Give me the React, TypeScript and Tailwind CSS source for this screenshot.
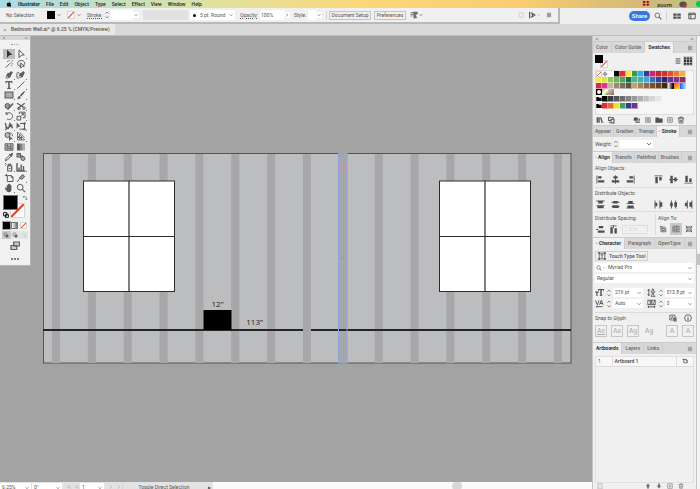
import type { ReactNode } from "react";
import clsx from "clsx";

const MENUS = ["File", "Edit", "Object", "Type", "Select", "Effect", "View", "Window", "Help"];

const f = { fill: "currentColor", stroke: "none" };

// All glyphs are drawn on a 10x10 grid
const GLYPHS: Record<string, ReactNode> = {
  apple: <path {...f} d="M6.600 1c0 1-.7 1.800-1.600 1.800C5 1.800 5.700 1 6.600 1ZM5 3.200c.6 0 1-.4 1.800-.4.700 0 1.300.4 1.700 1-1.500.9-1.200 3 .3 3.500C8.300 8.400 7.600 9.500 6.800 9.500c-.7 0-.9-.4-1.700-.4s-1 .4-1.700.4C2.300 9.500 1.200 7.500 1.200 5.700c0-1.800 1.100-2.900 2.200-2.900.7 0 1.100.4 1.600.4Z" />,
  selection: <path {...f} d="M3 .8 8.300 6H5.700L3 8.700Z" />,
  direct: <path d="M3 .9 8.300 6H5.700L3 8.700Z" />,
  wand: <path d="M1.500 8.800 6 4.300M6.800 3.500l1-1M5 1v1.300M8.800 4.800H7.500M8.900 1.100l-.7.7M3 2l.8.8M7.400 6.400l.8.900" />,
  lasso: <path d="M2.500 6.500C.6 4.500 2 1.500 5.200 1.500c3.400 0 4.500 3 2.500 4.800M2.500 6.500c1.200-.8 2.200.6 1 1.500M4.700 4l3.800 3.300H6.500L4.700 9Z" />,
  pen: <path {...f} d="m8.900 2.800-1.700-1.700-1.500 1.300-2.600 1L1.200 8.700l2.400-2.500.7.500-2.500 2.600 4.600-2 1.100-2.700Z" />,
  curvature: (
    <>
      <path {...f} d="M8.900 2.800 7.200 1.100 5.700 2.400l-2 1-1.400 4.400 2-2 .6.500-2 2 3.900-1.400 1-2.400Z" />
      <path d="M.9 3.800c0-2 2.200-2 2.200 0M.9 3.800v2c0 2 .6 3 1.700 3" />
    </>
  ),
  type: <path {...f} d="M1.500 1h7v2.300h-.8L7.300 2.200H5.800v5.600l1 .3V9H3.200v-.9l1-.3V2.200H2.700l-.4 1.100h-.8Z" />,
  line: <path d="m1.500 8.500 7-7" />,
  rect: <rect x="1" y="2" width="8" height="6" fill="#aaa" />,
  brush: <path {...f} d="M9.200.8c-2 .8-4 2.700-5.200 4.600L5.200 6.500C7 4.800 8.600 2.800 9.200.8ZM3.500 5.900C2 6 2.400 7.900.9 8.500c1.800.9 3.700.2 3.900-1.500Z" />,
  shaper: (
    <>
      <circle cx="3.500" cy="5" r="2.500" fill="#999" />
      <path d="M3.500 8.500 9 2.500" strokeWidth="1.800" />
    </>
  ),
  scissors: (
    <>
      <path d="M1 2.300 7.300 6M1.500 7.700 8.700 2.200" strokeWidth="1.200" />
      <circle cx="8" cy="7.200" r="1.200" />
      <circle cx="3" cy="7.500" r="1.200" />
    </>
  ),
  rotate: <path d="M2.200 2.700C5 .3 9 2.500 8.500 5.700 8 8.500 5 9.300 3 8M2 1v2.200h2.200" />,
  scale: <path d="M1 5.300h3.700V9H1ZM3.300 3V1.200H9v5.500H6.500M4.800 5 7.300 2.700M5.500 2.600h1.900v1.800" />,
  width: <path d="M1 2c1.500 1.500 1 5.500 3 5.500S4.500 3 6 3s1 3.500 3 4M1 8.700 8.500 4M1.500 5.500l2 2.500M6 1.700v4.500" strokeWidth="1.300" />,
  free: (
    <>
      <path {...f} d="M.6 1.500 4.800 5.600H2.700L.6 7.700Z" />
      <path d="M4 2.500h4.500v5.700H3.400M7.800 1.800h1.400v1.400H7.800ZM7.800 7.500h1.400v1.400H7.800Z" />
    </>
  ),
  builder: (
    <>
      <circle cx="3.500" cy="4" r="2.500" fill="#bbb" />
      <path d="M4.500 2.500c2-1.500 4.500.5 3.700 2.800" />
      <path {...f} d="M5 4.500 9 8.300H7L5 9.900Z" />
    </>
  ),
  perspective: <path d="M1.500 1v8h7.200ZM1.500 4.500l4 4.200M3.500 3v6M5.500 5v4M1.500 6.500h5M4 1.500l4.500 5" strokeWidth=".8" />,
  mesh: <path d="M1 1.700h8v6.600H1ZM1 4c2-1.500 3 2 8-.5M1 6.500c3-1.500 5 1 8-.5M3.600 1.700C2.500 4 5 6 3.600 8.300M6.500 1.700C5.500 4 8 6 6.500 8.300" fill="#bbb" strokeWidth=".8" />,
  gradient: (
    <>
      <rect x="1" y="1.500" width="3" height="7" {...f} />
      <rect x="4" y="1.500" width="2.500" height="7" {...f} opacity=".75" />
      <rect x="6.500" y="1.500" width="2.500" height="7" {...f} opacity=".45" />
    </>
  ),
  dropper: (
    <>
      <path d="M1.300 8.700 2 6.700 5.500 3.200 6.800 4.500 3.300 8Z" />
      <path {...f} d="m5 2.500.8-.7.600.5C7 1.500 8 .6 8.900 1.200c.7.900-.2 1.800-1 2.500l.4.600-.8.700Z" />
    </>
  ),
  blend: (
    <>
      <rect x="1" y="1.500" width="3.500" height="3.500" fill="#999" />
      <path {...f} d="m4 3 3 0 0 4-3-1.500Z" opacity=".6" />
      <circle cx="7" cy="6.500" r="2" fill="#aaa" />
    </>
  ),
  defaults: <path d="M1 1h5.500v5.500H1ZM4 4h5v5H4Z" fill="#fff" strokeWidth="1.500" />,
  spray: <path d="M3.700 4h4v5h-4ZM4.700 4V2.300h2V4M1 1.500h.8M1 3.500h.8M2.500 2.500h.8M5 6.500h1.500" strokeWidth="1.200" />,
  graph: <path d="M1 1v8h8.300M3 9V5.500M5.200 9V2.500M7.500 9V4" strokeWidth="1.400" />,
  artboard: <path d="M2.500.8V3M.8 2.600H3.300v5.900h5.700V4.200L7.500 2.600H3.300M7.300 2.600v1.800H9" />,
  slice: <path d="M1.200 8.800 4 5M3.700 4.600l3-3 2 2-3 3Z" fill="#999" />,
  hand: <path {...f} d="M2.700 5.200V2.700c0-.8 1-.8 1.100 0V1.500c0-.9 1.200-.9 1.200 0v-.2c0-.9 1.200-.9 1.200 0v1c0-.8 1.200-.8 1.200.1v4.100C7.400 8.300 6.500 9.200 5 9.200 3 9.200 2.400 7.700.9 5.500c-.4-.8.5-1.300 1-.8Z" />,
  search: (
    <>
      <circle cx="4.200" cy="4.200" r="2.900" />
      <path d="m6.400 6.400 2.700 2.700" strokeWidth="1.300" />
    </>
  ),
  swap: <path d="M2 2.800h3.200c1.200 0 2 .7 2 2V8M3.500 1 1.700 2.800l1.800 1.700M5.500 6.300 7.200 8.200 9 6.300" />,
  chevron: <path d="m2.500 3.700 2.500 2.500 2.500-2.500" />,
  right: <path d="m3.700 2.500 2.500 2.500-2.500 2.500" />,
  spinner: <path d="M3 3.300 5 1.300l2 2M3 6.700l2 2 2-2" strokeWidth=".8" />,
  close: <path d="m2 2 6 6M8 2 2 8" />,
  collapse: <path d="M4.700 2.500 2.200 5l2.500 2.500M8.200 2.500 5.700 5l2.500 2.500" />,
  menu: <path d="M1.500 2.200h7M1.500 4.100h7M1.500 6h7M1.500 7.900h7" />,
  list: <path d="M1 1.500h8M1 5h8M1 8.500h8" strokeWidth="1.600" />,
  grid: <path {...f} d="M0 .5h2.700v2.500H0ZM3.600.5h2.700v2.500H3.600ZM7.200.5h2.700v2.500H7.200ZM0 3.900h2.700v2.500H0ZM3.600 3.900h2.700v2.500H3.600ZM7.200 3.900h2.700v2.500H7.200ZM0 7.300h2.700v2.500H0ZM3.600 7.300h2.700v2.500H3.600ZM7.200 7.300h2.700v2.500H7.200Z" />,
  workspace: <path {...f} d="M.3 1.800h4.300v3H.3ZM5.400 1.800h4.300v3H5.400ZM.3 5.500h4.300v3H.3ZM5.400 5.500h4.300v3H5.400Z" />,
  panel: <path d="M1 1.500h8v7H1ZM1 3h8M3.500 3v5.500" strokeWidth="1.200" />,
  isolate: (
    <>
      <path d="M.8 2.200h4M.8 4.200h3M.8 6.200h2" />
      <path {...f} d="M4 1h5.500v3.500H7l2 4.500-2-.5-1 1.300L4.500 9Z" opacity=".85" />
    </>
  ),
  snap: <path d="M2 .8v8.400M3.500 2.500h2M3.500 7.500h2M5.500 3l3 2-3 2Z" strokeWidth="1.500" />,
  dots: <path d="M1 1.500h1.500M4.300 1.500h1.500M7.600 1.500h1.500M1 5h1.500M7.600 5h1.500M1 8.500h1.500M4.300 8.500h1.500M7.600 8.500h1.500" strokeWidth="1.500" />,
  folder: <path {...f} d="M.5 1.800h3.700l1 1.200h4.300v5.500h-9Z" />,
  books: <path {...f} d="M.8 1.500h1.700v7H.8ZM3 1.500h1.700v7H3ZM5 2l1.600-.5 2 6.500-1.600.6ZM9 8h.9v.8H9Z" />,
  cloud: <path d="M2 1.500v4h3M2 1.500h3M5 4h3.700v4.800H5ZM5.500 2h2V4M3 7.500v1.300" strokeWidth="1.300" />,
  kinds: <path {...f} d="M1 2h5v4H1ZM3 7h5.500v1.500H3ZM7 3h1.500v3H7Z" />,
  options: <path d="M1.200 1.200h7.600v7.600H1.200ZM3 3.500h4M3 5h4M3 6.500h4" />,
  add: <path d="M1.200 1.200h7.600v7.600H1.200ZM5 3v4M3 5h4" />,
  registration: <path d="M5 .5v9M.5 5h9M2.500 5a2.500 2.500 0 1 0 5 0 2.500 2.500 0 1 0-5 0" strokeWidth=".8" />,
  trash: <path d="M1 2.700h8M3.500 2.700V1.300h3v1.400M2.200 2.700l.5 6.100h4.600l.5-6.100M4.200 4.500v3M5.800 4.500v3" />,
  alignLeft: <path {...f} d="M.5.5h1v9h-1ZM2.300 1.300h3.900V4H2.300ZM2.300 5.700h6.900v2.700H2.300Z" />,
  alignCenter: <path {...f} d="M4.500.3h1v9.400h-1ZM2.700 1.300h4.600V4H2.700ZM.8 5.700h8.400v2.700H.8Z" />,
  alignRight: <path {...f} d="M8.500.5h1v9h-1ZM3.800 1.300h3.900V4H3.800ZM.8 5.700h6.900v2.700H.8Z" />,
  alignTop: <path {...f} d="M.5.5h9v1h-9ZM1.500 2.300h2.700v6.900H1.500ZM5.800 2.300h2.700v3.900H5.800Z" />,
  alignMiddle: <path {...f} d="M.3 4.500h9.400v1H.3ZM1.500.8h2.700v8.400H1.500ZM5.800 2.700h2.700v4.600H5.800Z" />,
  alignBottom: <path {...f} d="M.5 8.500h9v1h-9ZM1.500.8h2.700v6.900H1.500ZM5.800 3.800h2.700v3.900H5.800Z" />,
  distTop: <path {...f} d="M.5.6h9v1h-9ZM2.500 1.700h5v2.300h-5ZM.5 5.500h9v1h-9ZM1.500 6.600h7v2.500h-7Z" />,
  distMiddle: <path {...f} d="M.5 2h9v1h-9ZM2.500 1h5v3h-5ZM.5 6.900h9v1h-9ZM1.500 5.900h7v3h-7Z" />,
  distBottom: <path {...f} d="M.5 3.500h9v1h-9ZM2.500 1h5v2.500h-5ZM.5 8.500h9v1h-9ZM1.500 6h7v2.500h-7Z" />,
  distLeft: <path {...f} d="M.6.5h1v9h-1ZM1.700 3h2v4h-2ZM6 .5h1v9H6ZM7 2.500h2.200v5H7Z" />,
  distCenter: <path {...f} d="M2.200.5h1v9h-1ZM1.200 3h3v4h-3ZM6.900.5h1v9h-1ZM5.900 2.500h3v5h-3Z" />,
  distRight: <path {...f} d="M3.200.5h1v9h-1ZM1 3h2.200v4H1ZM8.300.5h1v9h-1ZM6 2.500h2.300v5H6Z" />,
  spaceV: <path {...f} d="M3 1h5v2.700H3ZM2 6h7.500v2.700H2ZM.3 4.500h2v1h-2Z" />,
  spaceH: <path {...f} d="M1.500 2.500h2.700v7H1.500ZM6 3.500h2.700v6H6ZM4.500.3h1v3h-1ZM1.500.5h7v1h-7Z" />,
  toArtboard: <path d="M2.500 1v7.500h6V4L6.500 2.500H1M4 4.300h2.700v2.500H4Z" />,
  toSelection: <path d="M1 1.500h8v7H1ZM3.700 1v8M6.400 1v8M1 3.800h8M1 6.300h8" strokeDasharray="1.200 .8" />,
  toKey: <path d="M2.500 2.500h5v5h-5ZM1 1l1.500 1.500M9 1 7.500 2.500M1 9l1.500-1.500M9 9 7.500 7.500M4 5h2" strokeWidth="1.200" />,
  touch: <path d="M1.500 1.500h7v7h-7ZM3.200 3.500h3.600M5 3.500v4M.5.500h1.500v1.500H.5ZM8 .5h1.500v1.500H8ZM.5 8h1.500v1.500H.5ZM8 8h1.500v1.500H8Z" />,
  fontSize: <path {...f} d="M.3 4h3.700v1.300H2.800V9H1.500V5.300H.3ZM3.500 1h6.300v2.300h-.9V2.200H7.500v6h.9V9H5V8.200h.9v-6H4.400v1.100h-.9Z" />,
  leading: <path d="M2 1.500v7M.7 3 2 1.500 3.300 3M.7 7 2 8.500 3.300 7M5 4l1.500-3.200L8 4M5 8.500l1.500-3.200L8 8.500M4.300 4.600h5M4.300 9.200h5" />,
  kerning: <path d="m.5 1.500 2 5 2-5M5 6.500l2-5 2 5M5.700 5h2.600M1.500 8.500h7M2.700 7.500l-1.200 1 1.200 1" />,
  tracking: (
    <>
      <path {...f} d="M.3.8h9.400v6H.3Z" opacity=".8" />
      <path stroke="#eee" d="m1.200 2 1.100 3.500L3.500 2M5.500 5.500 7 2l1.500 3.500" />
      <path d="M1 8.700h8M2.200 7.700l-1.200 1 1.200 1M7.800 7.700l1.200 1-1.200 1" />
    </>
  ),
  info: (
    <>
      <circle cx="5" cy="5" r="4.200" />
      <path d="M5 4.500V7.500M5 2.500v1" strokeWidth="1.200" />
    </>
  ),
  glyph: (
    <>
      <path d="M1 1.500h6.500v6H1ZM2.500 6.500 4.200 3l1.500 3.500" />
      <path {...f} d="M5.800 4.500h3.800v5H5.800Z" opacity=".7" />
    </>
  ),
  page: <path d="M.8 2.500h3.700M3 1v7h5.800V4.200L7 2.500H4.500M7 2.500v2h1.800" strokeWidth="1.300" />,
  up: <path {...f} d="m5 1 4 4.500H6.500V9h-3V5.500H1Z" />,
  down: <path {...f} d="m5 9 4-4.500H6.500V1h-3v3.500H1Z" />,
  screen: <path d="M3.700 1h5.800v4H3.700ZM1 4.500h5.800v4H1Z" fill="#ccc" strokeWidth="1.200" />,
  dropbox: <path {...f} d="m2.700 1 2.300 1.500-2.300 1.600L.4 2.500ZM7.300 1l2.300 1.500-2.300 1.600L5 2.500ZM2.700 4.300 5 5.900 2.700 7.400.4 5.900ZM7.300 4.300l2.300 1.600-2.300 1.500L5 5.900Z" />,
  creative: (
    <>
      <ellipse cx="5" cy="5.500" rx="4.600" ry="3.500" {...f} />
      <circle cx="7.500" cy="7.500" r="2" fill="#e23" stroke="none" />
    </>
  ),
  mode: (
    <>
      <circle cx="4" cy="4" r="2.700" />
      <path {...f} d="M4.500 4.500H9V9H4.500Z" />
    </>
  ),
};

const SIZES = { 4: "size-1", 6: "size-1.5", 8: "size-2", 9: "size-[9px]", 10: "size-2.5" };

function Icon({ name, size = 8, className }: { name: string; size?: keyof typeof SIZES; className?: string }) {
  return (
    <svg
      viewBox="0 0 10 10"
      fill="none"
      stroke="currentColor"
      className={clsx("shrink-0", SIZES[size], className)}
      aria-hidden
    >
      {GLYPHS[name]}
    </svg>
  );
}

function IconButton({ name, label, size = 8, className }: { name: string; label?: string; size?: keyof typeof SIZES; className?: string }) {
  return (
    <button type="button" aria-label={label ?? name} className={clsx("flex shrink-0 items-center justify-center", className)}>
      <Icon name={name} size={size} />
    </button>
  );
}

function Select({ label, value = "", className }: { label: string; value?: string; className?: string }) {
  return (
    <span className={clsx("flex h-[9px] items-center bg-white", className)}>
      <select aria-label={label} className="h-full min-w-0 flex-1 appearance-none overflow-hidden px-0.5 leading-[9px]">
        <option>{value}</option>
      </select>
      <Icon name="chevron" size={6} className="pointer-events-none mr-px" />
    </span>
  );
}

function NoneSwatch({ className }: { className?: string }) {
  return (
    <svg viewBox="0 0 10 10" className={clsx("shrink-0 bg-white outline outline-neutral-300 -outline-offset-1", className)} aria-hidden>
      <path d="M0 10 10 0" stroke="#e2452f" strokeWidth="1.500" />
    </svg>
  );
}

function MenuBar() {
  return (
    <header className="flex h-2 shrink-0 items-center bg-[linear-gradient(90deg,#a8dce6,#dfe3a0_30%,#fbd779_52%,#f9cd70_75%,#d2b878_92%,#b9c37e)] pl-1.5 text-[5px] text-neutral-800">
      <Icon name="apple" size={6} className="mr-1.5 text-black" />
      <nav className="flex items-center gap-1.5">
        <button type="button" className="font-bold">Illustrator</button>
        {MENUS.map((menu) => (
          <button key={menu} type="button" className="font-medium">{menu}</button>
        ))}
      </nav>
      <div className="ml-auto flex items-center gap-[7px]">
        <Icon name="dropbox" size={8} className="text-red-800" />
        <span className="text-[6px] font-medium">zoom</span>
        <Icon name="creative" size={8} className="text-neutral-600" />
        <span className="ml-0.5 h-1.5 w-1 rounded-l-sm bg-green-500" />
      </div>
    </header>
  );
}

function ControlBar() {
  return (
    <div className="flex h-4 shrink-0 items-stretch bg-[#eeeeee]">
      <div className="flex w-4/5 items-center border-r-2 border-b-2 border-[#b9b9b9] bg-[#f0f0f0] pl-1.5">
        <span className="w-10 shrink-0">No Selection</span>
        <button type="button" aria-label="Fill" className="ml-px size-2 shrink-0 bg-black" />
        <Icon name="chevron" size={6} className="mx-px" />
        <button type="button" aria-label="Stroke colour" className="ml-1 flex shrink-0">
          <NoneSwatch className="size-2" />
        </button>
        <Icon name="chevron" size={6} className="mx-px" />
        <label htmlFor="stroke-width" className="ml-1 w-4 shrink-0 underline decoration-dotted">Stroke:</label>
        <Icon name="spinner" size={8} />
        <input id="stroke-width" className="h-2.5 w-[22px] shrink-0 bg-white" />
        <Icon name="chevron" size={6} className="bg-white" />
        <select disabled aria-label="Width profile" className="mr-0.5 ml-1 h-2.5 w-[45px] shrink-0 appearance-none bg-[#e2e2e2]">
          <option />
        </select>
        <span className="flex h-2.5 w-[45px] shrink-0 items-center bg-white pl-[3px]">
          <span className="mr-0.5 size-[3px] shrink-0 rounded-full bg-black" />
          <Select label="Brush definition" value="5 pt. Round" className="min-w-0 flex-1" />
        </span>
        <label htmlFor="opacity" className="ml-[5px] w-5 shrink-0 underline decoration-dotted">Opacity:</label>
        <input id="opacity" defaultValue="100%" className="h-2.5 w-6 shrink-0 bg-white px-px" />
        <Icon name="right" size={6} className="bg-white" />
        <span className="ml-1 w-[14px] shrink-0">Style:</span>
        <span className="h-2.5 w-2 shrink-0 bg-white" />
        <Icon name="chevron" size={6} className="bg-white" />
        <div className="ml-1 flex shrink-0 items-center gap-[3px] border-l border-neutral-300 pl-0.5">
          <button type="button" className="h-[9px] w-[42px] border border-[#c4c4c4] leading-[7px]">Document Setup</button>
          <button type="button" className="h-[9px] w-8 border border-[#c4c4c4] leading-[7px]">Preferences</button>
        </div>
        <IconButton name="isolate" label="Select similar" className="ml-1" />
        <Icon name="chevron" size={6} />
        <div className="mr-1.5 ml-auto flex items-center gap-1">
          <IconButton name="dots" label="Align to pixel grid" size={6} className="text-neutral-400" />
          <span className="flex items-center">
            <IconButton name="snap" label="Snap" />
            <Icon name="chevron" size={6} className="text-neutral-400" />
          </span>
          <IconButton name="menu" label="Control menu" size={6} />
        </div>
      </div>
      <div className="flex flex-1 items-center justify-end pr-1">
        <button type="button" className="h-2.5 w-[21px] rounded-full bg-[#3878dc] text-[6px] leading-[10px] font-medium text-white">Share</button>
        <IconButton name="search" label="Search" className="mr-1 ml-1" />
        <span className="h-2.5 border-l border-neutral-300" />
        <IconButton name="workspace" label="Arrange documents" className="ml-1.5" />
        <IconButton name="panel" label="Workspace" className="ml-[7px]" />
      </div>
    </div>
  );
}

const TOOLS = [
  "selection", "direct", "wand", "lasso", "pen", "curvature", "type", "line", "rect", "brush",
  "shaper", "scissors", "rotate", "scale", "width", "free", "builder", "perspective", "mesh", "gradient",
  "dropper", "blend", "spray", "graph", "artboard", "slice", "hand", "search",
];

const SINGLE_TOOLS = ["selection", "wand", "lasso", "mesh", "gradient", "dropper", "blend", "artboard", "search"];

function Toolbar() {
  return (
    <aside className="absolute top-0 left-0 flex h-[230px] w-[31px] flex-col border-r border-b border-[#b5b5b5] bg-[#f1f1f1] text-[#5c5c5c]">
      <div className="flex h-1 shrink-0 items-center justify-between bg-[#d6d6d6] px-0.5">
        <Icon name="close" size={4} />
        <Icon name="collapse" size={4} />
      </div>
      <div className="mx-auto mt-1 h-px w-2 border-t border-dotted border-neutral-400" />
      <div className="mt-1 grid h-[144px] shrink-0 grid-cols-2 px-[3px]">
        {TOOLS.map((tool) => (
          <button
            key={tool}
            type="button"
            aria-label={tool}
            className={clsx(
              "flex items-center justify-center",
              tool === "selection" && "bg-[#bdbdbd] text-[#333]",
            )}
          >
            <Icon name={tool} size={10} />
            {!SINGLE_TOOLS.includes(tool) && <span className="-mr-px size-px shrink-0 self-end bg-neutral-500" />}
          </button>
        ))}
      </div>
      <div className="mt-0.5 grid h-[23px] shrink-0 grid-cols-[18px_8px] pl-[3px]">
        <div className="relative">
          <NoneSwatch className="absolute top-2 left-[7px] size-[15px]" />
          <span className="absolute top-0 left-0 size-[15px] border border-neutral-500 bg-black" />
          <Icon name="defaults" size={6} className="absolute bottom-0 left-0 text-black" />
        </div>
        <Icon name="swap" size={6} className="ml-px" />
      </div>
      <div className="mt-[3px] flex h-2 shrink-0 items-center justify-around px-0.5">
        <button type="button" aria-label="Color" className="size-[7px] bg-black outline outline-neutral-400" />
        <button type="button" aria-label="Gradient" className="size-[7px] border border-neutral-500 bg-linear-to-r from-white to-neutral-500" />
        <button type="button" aria-label="None" className="flex"><NoneSwatch className="size-[7px]" /></button>
      </div>
      <div className="mt-0.5 flex h-2 shrink-0 items-center px-[2px]">
        <IconButton name="mode" label="Draw normal" size={6} className="h-2 flex-1 bg-[#c8c8c8]" />
        <IconButton name="mode" label="Draw behind" size={6} className="h-2 flex-1 bg-[#e4e4e4]" />
        <IconButton name="mode" label="Draw inside" size={6} className="h-2 flex-1 bg-[#e4e4e4] text-neutral-300" />
      </div>
      <IconButton name="screen" label="Screen mode" size={10} className="mt-0.5" />
      <button type="button" aria-label="Edit toolbar" className="mt-[7px] flex justify-center gap-px">
        <span className="size-0.5 rounded-full bg-[#555]" />
        <span className="size-0.5 rounded-full bg-[#555]" />
        <span className="size-0.5 rounded-full bg-[#555]" />
      </button>
    </aside>
  );
}

const STRIPES = Array.from({ length: 15 }, (_, i) => 52 + i * 35.85);

function WindowShape({ x }: { x: number }) {
  return (
    <g transform={`translate(${x} 145)`} stroke="#2c2c2c">
      <rect width="91" height="110.500" fill="#fff" />
      <path d="M45.500 0v110M0 55.500h91" strokeWidth="1.200" />
    </g>
  );
}

function Artwork() {
  return (
    <svg viewBox="0 0 592 446" className="h-full w-full" role="img" aria-label="Wall elevation">
      <rect x="43.500" y="117.500" width="527.500" height="209.500" fill="#bcbdbf" stroke="#555" />
      {STRIPES.map((x) => (
        <rect key={x} x={x} y="118" width="8" height="209" fill="#a7a7a9" />
      ))}
      <WindowShape x={83.5} />
      <WindowShape x={439.5} />
      <path d="M43 294h260M311 294h260" stroke="#222426" strokeWidth="2" />
      <rect x="203.500" y="274" width="28" height="20" />
      <g fontSize="8" fill="#222" textAnchor="middle" className="font-['Open_Sans','Noto_Sans',sans-serif]">
        <text x="217.500" y="271">12”</text>
        <text x="254.500" y="289">113”</text>
      </g>
      <rect x="338.500" y="117.500" width="8.500" height="209.500" fill="none" stroke="#8fa3dc" />
      <path d="M338.500 133.500l2-1 2 .5 2-1 2.500.5" fill="none" stroke="#d685c8" strokeWidth="1.500" />
      <path d="m341.500 221.500 2 2m0-2-2 2" stroke="#7d8fd0" strokeWidth=".8" />
    </svg>
  );
}

function StatusBar() {
  return (
    <footer className="flex h-[7px] shrink-0 items-start overflow-hidden bg-[#e3e3e3] pt-px leading-[9px]">
      <Select label="Zoom" value="6.25%" className="w-[31px]" />
      <Select label="Rotation" value="0°" className="ml-px w-[30px]" />
      <span className="ml-1 flex items-center gap-0.5 pt-px text-neutral-400">
        <Icon name="collapse" size={6} />
        <Icon name="collapse" size={6} />
      </span>
      <Select label="Artboard" value="1" className="w-6" />
      <span className="ml-1 flex items-center gap-0.5 pt-px text-neutral-400">
        <Icon name="right" size={6} />
        <Icon name="right" size={6} />
      </span>
      <span className="w-[83px] border-l border-neutral-300 text-center">Toggle Direct Selection</span>
      <span className="w-2 text-center text-[4px]">▶</span>
      <div className="-mt-px h-[7px] flex-1 bg-[#fafafa]">
        <div className="ml-[63%] h-2 w-2.5 rounded-full bg-[#d8d8d8]" />
      </div>
    </footer>
  );
}

function PanelTabs({ tabs, active }: { tabs: string[]; active: string }) {
  return (
    <div role="tablist" className="flex h-3 shrink-0 items-stretch border-t border-[#cbcbcb] bg-[#d8d8d8]">
      {tabs.map((tab) => (
        <button
          key={tab}
          type="button"
          role="tab"
          aria-selected={tab === active}
          className={clsx(
            "border-r border-[#cdcdcd] whitespace-nowrap",
            tabs.length > 3 ? "px-0.5" : "px-[3px]",
            tab === active ? "bg-[#f0f0f0] font-bold text-[#333]" : "font-medium text-[#666]",
          )}
        >
          {tab}
        </button>
      ))}
      <IconButton name="menu" label="Panel menu" size={6} className="mr-[3px] ml-auto text-neutral-500" />
    </div>
  );
}

const SWATCH_ROWS = [
  ["#ffffff", "#0a0a0a", "#e32b35", "#f6e63c", "#2e9c50", "#35aee4", "#2f3d98", "#d4206f", "#bd2738", "#cf3033", "#d9542f", "#eb7d37", "#f2ad45"],
  ["#f8ee3f", "#dfe04b", "#96c657", "#6cb554", "#4ca657", "#1c6b3f", "#50b583", "#4aafa2", "#3da5da", "#2f74b8", "#34409a", "#2b2664", "#63368f", "#8b2f89", "#8c2c70"],
  ["#d02a59", "#d83b83", "#c5b6a0", "#9c8a78", "#7c6c5e", "#5d5148", "#c3a07a", "#a78258", "#8f6841", "#77502b", "#65401e", "#462812"],
];
const GRAYS = ["#000000", "#3a3a3a", "#555555", "#6c6c6c", "#848484", "#9b9b9b", "#b0b0b0", "#c3c3c3", "#d5d5d5", "#e5e5e5"];
const BRIGHTS = ["#dd2f35", "#e9672f", "#f3dc3c", "#3ca357", "#2d3f98", "#74338d"];

function Swatch({ color }: { color: string }) {
  return <button type="button" aria-label={color} className="size-1.5 border-r border-b border-white/50" style={{ background: color }} />;
}

function SwatchesPanel() {
  return (
    <div className="flex h-[72px] shrink-0 flex-col px-0.5 pt-0.5">
      <div className="flex h-[15px] items-start">
        <div className="relative size-[13px]">
          <NoneSwatch className="absolute right-0 bottom-0 size-2" />
          <span className="absolute top-0 left-0 size-2 bg-black" />
        </div>
        <div className="mt-px mr-px ml-auto flex">
          <IconButton name="list" label="List view" size={6} className="size-2.5" />
          <IconButton name="grid" label="Thumbnail view" size={8} className="size-2.5 bg-[#c9c9c9] text-[#333]" />
        </div>
      </div>
      <div className="h-[45px] border border-[#dedede] bg-[#f6f6f6]">
        <div className="flex">
          <NoneSwatch className="size-1.5" />
          <Icon name="registration" size={6} className="bg-white" />
          {SWATCH_ROWS[0].map((c) => <Swatch key={c} color={c} />)}
        </div>
        <div className="flex">{SWATCH_ROWS[1].map((c) => <Swatch key={c} color={c} />)}</div>
        <div className="flex">
          {SWATCH_ROWS[2].map((c) => <Swatch key={c} color={c} />)}
          <button type="button" aria-label="White to black" className="size-1.5 bg-linear-to-r from-white to-black" />
          <button type="button" aria-label="Sunset" className="size-1.5 bg-linear-to-br from-red-500 to-yellow-300" />
          <button type="button" aria-label="Sky" className="size-1.5 bg-linear-to-r from-blue-600 to-sky-200" />
        </div>
        <div className="flex">
          <button type="button" aria-label="Vignette" className="flex size-1.5 items-center justify-center bg-black">
            <span className="size-1 rounded-full bg-white" />
          </button>
          <button type="button" aria-label="Foliage" className="size-1.5 bg-linear-to-br from-lime-500 via-white to-lime-600" />
          <button type="button" aria-label="Bark" className="size-1.5 bg-linear-to-br from-stone-300 to-[#8d6b45]" />
        </div>
        <div className="mt-px flex">
          <Icon name="folder" size={6} className="text-black" />
          {GRAYS.map((c) => <Swatch key={c} color={c} />)}
        </div>
        <div className="mt-px flex">
          <Icon name="folder" size={6} className="text-black" />
          {BRIGHTS.map((c) => <Swatch key={c} color={c} />)}
        </div>
      </div>
      <div className="flex h-2.5 items-center gap-[3px] px-px">
        <IconButton name="books" label="Swatch libraries" />
        <IconButton name="cloud" label="Add to library" />
        <IconButton name="kinds" label="Swatch kinds" className="ml-auto" />
        <IconButton name="options" label="Swatch options" size={6} className="size-2" />
        <IconButton name="folder" label="New group" />
        <IconButton name="add" label="New swatch" size={6} className="size-2" />
        <IconButton name="trash" label="Delete" className="mr-2" />
      </div>
    </div>
  );
}

function IconRow({ names }: { names: string[] }) {
  return (
    <div className="flex h-3 items-center justify-between px-px">
      <div className="flex gap-1.5">
        {names.slice(0, 3).map((n) => <IconButton key={n} name={n} size={9} />)}
      </div>
      <div className="flex gap-1.5">
        {names.slice(3).map((n) => <IconButton key={n} name={n} size={9} />)}
      </div>
    </div>
  );
}

function AlignPanel() {
  return (
    <div className="flex h-[74px] shrink-0 flex-col px-0.5 pt-px leading-[9px]">
      <span>Align Objects:</span>
      <IconRow names={["alignLeft", "alignCenter", "alignRight", "alignTop", "alignMiddle", "alignBottom"]} />
      <hr className="mt-0.5 border-[#dcdcdc]" />
      <span className="mt-px">Distribute Objects:</span>
      <IconRow names={["distTop", "distMiddle", "distBottom", "distLeft", "distCenter", "distRight"]} />
      <div className="mt-px flex border-t border-[#dcdcdc] pt-0.5">
        <div className="w-[61px] border-r border-[#dcdcdc]">
          <span>Distribute Spacing:</span>
          <div className="flex h-3 items-center gap-1 pl-px">
            <IconButton name="spaceV" label="Vertical distribute space" size={9} />
            <IconButton name="spaceH" label="Horizontal distribute space" size={9} />
            <span className="flex h-[9px] w-[26px] items-center border border-[#dedede] text-neutral-300">
              <Icon name="spinner" size={6} />
              <input disabled aria-label="Spacing" defaultValue="0 in" className="w-4" />
            </span>
          </div>
        </div>
        <div className="flex-1 pl-0.5">
          <span>Align To:</span>
          <div className="flex h-3 items-center justify-between">
            <IconButton name="toArtboard" label="Align to artboard" size={8} className="size-2.5" />
            <IconButton name="toSelection" label="Align to selection" className="size-3 bg-[#c9c9c9]" />
            <IconButton name="toKey" label="Align to key object" size={8} className="size-2.5" />
          </div>
        </div>
      </div>
    </div>
  );
}

function Metric({ icon, label, value }: { icon: string; label: string; value: string }) {
  return (
    <div className="flex min-w-0 flex-1 items-center">
      <Icon name={icon} size={9} />
      <Icon name="spinner" size={8} className="ml-px" />
      <Select label={label} value={value} className="min-w-0 flex-1" />
    </div>
  );
}

function CharacterPanel() {
  return (
    <div className="flex h-[93px] shrink-0 flex-col px-0.5 pt-0.5">
      <button type="button" className="flex h-2.5 w-[53px] items-center gap-[3px] border border-[#cfcfcf] pl-0.5 font-medium whitespace-nowrap">
        <Icon name="touch" size={8} />
        <span>Touch Type Tool</span>
      </button>
      <div className="mt-0.5 flex h-[9px] shrink-0 items-center bg-white">
        <Icon name="search" size={6} className="ml-px" />
        <Icon name="chevron" size={4} />
        <Select label="Font family" value="Myriad Pro" className="min-w-0 flex-1" />
      </div>
      <Select label="Font style" value="Regular" className="mt-0.5 shrink-0" />
      <div className="mt-[5px] flex h-[9px] shrink-0 gap-1">
        <Metric icon="fontSize" label="Font size" value="219 pt" />
        <Metric icon="leading" label="Leading" value="513.8 pt" />
      </div>
      <div className="mt-0.5 flex h-[9px] shrink-0 gap-1">
        <Metric icon="kerning" label="Kerning" value="Auto" />
        <Metric icon="tracking" label="Tracking" value="0" />
      </div>
      <div className="mt-1 flex h-[11px] shrink-0 items-center border-t border-[#dcdcdc]">
        <span>Snap to Glyph</span>
        <Icon name="glyph" size={8} className="mr-[7px] ml-auto" />
        <Icon name="info" size={8} className="mr-0.5" />
      </div>
      <div className="mt-0.5 flex h-3 shrink-0 items-center gap-1 text-[7px] leading-[10px] text-[#a8a8a8]">
        <button type="button" className="h-3 w-3 border border-[#c6c6c6] underline">Ax</button>
        <button type="button" className="h-3 w-3 border border-[#c6c6c6]">Ax</button>
        <button type="button" className="h-3 w-3 border border-[#c6c6c6]">Ag</button>
        <button type="button" className="h-3 w-3">Ag</button>
        <button type="button" className="ml-auto h-3 w-3 border border-[#c6c6c6]">A</button>
        <button type="button" className="h-3 w-3 border border-[#c6c6c6]">A</button>
      </div>
    </div>
  );
}

function ArtboardsPanel() {
  return (
    <div className="flex min-h-0 flex-1 flex-col px-0.5 pt-0.5">
      <div className="flex-1 border border-[#e0e0e0]">
        <table className="w-full">
          <tbody>
            <tr className="h-[9px] border-b border-[#dcdcdc] bg-[#f7f7f7] leading-[8px]">
              <td className="w-4 pl-0.5">1</td>
              <td className="border-x border-[#dcdcdc] pl-0.5 font-semibold">Artboard 1</td>
              <td className="w-[17px]"><Icon name="page" size={6} className="mx-auto" /></td>
            </tr>
          </tbody>
        </table>
      </div>
      <div className="flex h-1.5 shrink-0 items-start gap-[5px] overflow-hidden px-0.5 text-neutral-500">
        <Icon name="dots" size={6} className="mr-auto" />
        <IconButton name="up" label="Move up" size={6} />
        <IconButton name="down" label="Move down" size={6} />
        <IconButton name="add" label="New artboard" size={6} />
        <IconButton name="trash" label="Delete artboard" size={6} className="mr-2" />
      </div>
    </div>
  );
}

function RightDock() {
  return (
    <aside className="flex w-[105px] shrink-0 flex-col overflow-hidden border-x border-[#c4c4c4] bg-[#f0f0f0] text-[#4f4f4f]">
      <div className="flex h-[5px] shrink-0 items-center justify-between bg-[#dcdcdc] px-0.5">
        <Icon name="close" size={4} />
        <Icon name="collapse" size={4} />
      </div>
      <PanelTabs tabs={["Color", "Color Guide", "Swatches"]} active="Swatches" />
      <SwatchesPanel />
      <PanelTabs tabs={["Appear", "Gradien", "Transp", "◦ Stroke"]} active="◦ Stroke" />
      <div className="flex h-[14px] shrink-0 items-center px-0.5">
        <label htmlFor="weight" className="w-[17px]">Weight:</label>
        <Icon name="spinner" size={8} />
        <input id="weight" className="h-2 w-[25px] bg-white" />
        <Icon name="chevron" size={8} className="bg-white" />
      </div>
      <PanelTabs tabs={["◦ Align", "Transfo", "Pathfind", "Brushes"]} active="◦ Align" />
      <AlignPanel />
      <PanelTabs tabs={["◦ Character", "Paragraph", "OpenType"]} active="◦ Character" />
      <CharacterPanel />
      <PanelTabs tabs={["Artboards", "Layers", "Links"]} active="Artboards" />
      <ArtboardsPanel />
    </aside>
  );
}

export default function App() {
  return (
    <div className="flex h-screen flex-col overflow-hidden bg-[#d9d9d9] font-['Roboto','Noto_Sans',sans-serif] text-[5px] leading-[7px] text-[#555]">
      <MenuBar />
      <ControlBar />
      <div className="flex h-3 shrink-0 border-b border-[#bdbdbd]">
        <div className="flex items-center gap-1 bg-[#e8e8e8] pr-[5px] pl-[3px] font-medium">
          <IconButton name="close" label="Close document" size={4} />
          <span>Bedroom Wall.ai* @ 6.25 % (CMYK/Preview)</span>
        </div>
      </div>
      <div className="flex min-h-0 flex-1">
        <div className="flex min-w-0 flex-1 flex-col">
          <main className="relative min-h-0 flex-1 bg-[#a3a3a3]">
            <Artwork />
            <Toolbar />
          </main>
          <StatusBar />
        </div>
        <RightDock />
        <div className="w-[3px] shrink-0 bg-[#f4f4f4] pt-[218px]">
          <div className="h-[11px] bg-[#c4c4c4]" />
        </div>
      </div>
    </div>
  );
}
